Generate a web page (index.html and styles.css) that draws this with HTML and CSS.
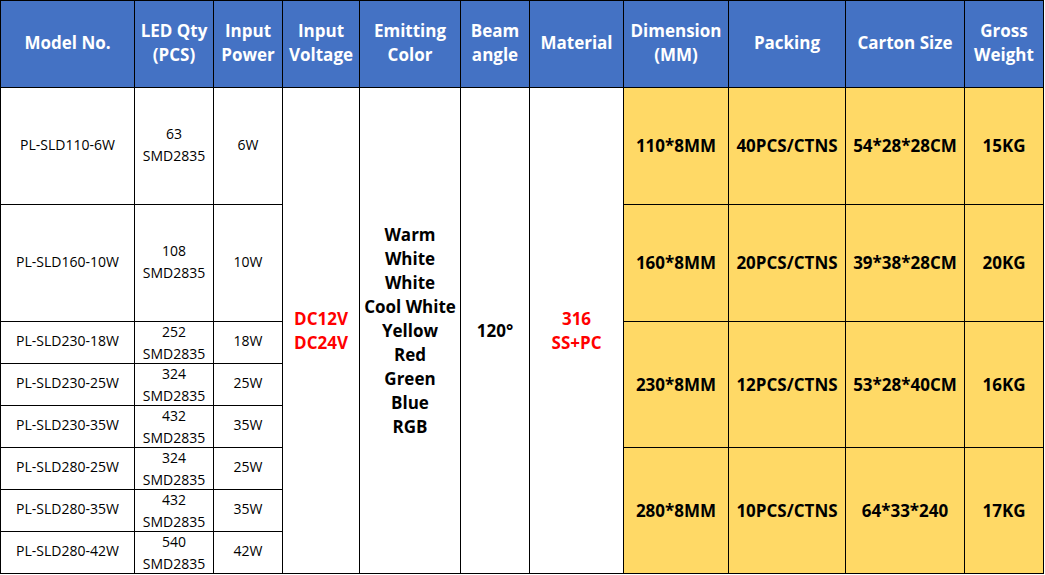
FILE: index.html
```html
<!DOCTYPE html>
<html>
<head>
<meta charset="utf-8">
<link rel="stylesheet" href="styles.css">
</head>
<body>
<table class="spec">
  <colgroup>
    <col class="c1"><col class="c2"><col class="c3"><col class="c4"><col class="c5"><col class="c6"><col class="c7"><col class="c8"><col class="c9"><col class="c10"><col class="c11">
  </colgroup>
  <thead>
    <tr class="head">
      <th>Model No.</th>
      <th>LED Qty<br>(PCS)</th>
      <th>Input<br>Power</th>
      <th>Input<br>Voltage</th>
      <th>Emitting<br>Color</th>
      <th>Beam<br>angle</th>
      <th>Material</th>
      <th>Dimension<br>(MM)</th>
      <th>Packing</th>
      <th>Carton Size</th>
      <th>Gross<br>Weight</th>
    </tr>
  </thead>
  <tbody>
    <tr class="tall">
      <td>PL-SLD110-6W</td>
      <td>63<br>SMD2835</td>
      <td>6W</td>
      <td rowspan="8" class="red">DC12V<br>DC24V</td>
      <td rowspan="8" class="bold">Warm<br>White<br>White<br>Cool White<br>Yellow<br>Red<br>Green<br>Blue<br>RGB</td>
      <td rowspan="8" class="bold">120°</td>
      <td rowspan="8" class="red">316<br>SS+PC</td>
      <td class="yel">110*8MM</td>
      <td class="yel">40PCS/CTNS</td>
      <td class="yel">54*28*28CM</td>
      <td class="yel">15KG</td>
    </tr>
    <tr class="tall">
      <td>PL-SLD160-10W</td>
      <td>108<br>SMD2835</td>
      <td>10W</td>
      <td class="yel">160*8MM</td>
      <td class="yel">20PCS/CTNS</td>
      <td class="yel">39*38*28CM</td>
      <td class="yel">20KG</td>
    </tr>
    <tr class="short">
      <td>PL-SLD230-18W</td>
      <td class="qty"><div class="fit">252<br>SMD2835</div></td>
      <td>18W</td>
      <td rowspan="3" class="yel">230*8MM</td>
      <td rowspan="3" class="yel">12PCS/CTNS</td>
      <td rowspan="3" class="yel">53*28*40CM</td>
      <td rowspan="3" class="yel">16KG</td>
    </tr>
    <tr class="short">
      <td>PL-SLD230-25W</td>
      <td class="qty"><div class="fit">324<br>SMD2835</div></td>
      <td>25W</td>
    </tr>
    <tr class="short">
      <td>PL-SLD230-35W</td>
      <td class="qty"><div class="fit">432<br>SMD2835</div></td>
      <td>35W</td>
    </tr>
    <tr class="short">
      <td>PL-SLD280-25W</td>
      <td class="qty"><div class="fit">324<br>SMD2835</div></td>
      <td>25W</td>
      <td rowspan="3" class="yel">280*8MM</td>
      <td rowspan="3" class="yel">10PCS/CTNS</td>
      <td rowspan="3" class="yel">64*33*240</td>
      <td rowspan="3" class="yel">17KG</td>
    </tr>
    <tr class="short">
      <td>PL-SLD280-35W</td>
      <td class="qty"><div class="fit">432<br>SMD2835</div></td>
      <td>35W</td>
    </tr>
    <tr class="short">
      <td>PL-SLD280-42W</td>
      <td class="qty"><div class="fit">540<br>SMD2835</div></td>
      <td>42W</td>
    </tr>
  </tbody>
</table>
</body>
</html>
```
FILE: styles.css
```css
html, body {
  margin: 0;
  padding: 0;
  background: #ffffff;
}

.spec {
  border-collapse: collapse;
  table-layout: fixed;
  width: 1044px;
  font-family: "Open Sans", "Noto Sans", sans-serif;
  color: #000;
}

.c1 { width: 134px; }
.c2 { width: 79px; }
.c3 { width: 69px; }
.c4 { width: 77px; }
.c5 { width: 101px; }
.c6 { width: 69px; }
.c7 { width: 94px; }
.c8 { width: 105px; }
.c9 { width: 117px; }
.c10 { width: 119px; }
.c11 { width: 79px; }

.spec th,
.spec td {
  border: 1px solid #000;
  padding: 0;
  text-align: center;
  vertical-align: middle;
  white-space: nowrap;
}

.spec th {
  background: #4472c4;
  color: #ffffff;
  font-weight: 700;
  font-size: 17px;
  line-height: 24px;
  padding-bottom: 2px;
}

.head { height: 87px; }
.tall { height: 117px; }
.short { height: 42px; }

.spec td {
  font-size: 14px;
  line-height: 22px;
  padding-bottom: 3px;
}

.spec td.qty {
  padding-bottom: 0;
}

.fit {
  height: 41px;
  display: flex;
  flex-direction: column;
  justify-content: center;
  align-items: center;
  line-height: 22px;
}

.spec td.bold,
.spec td.red,
.spec td.yel {
  font-weight: 700;
  font-size: 17px;
  line-height: 24px;
  padding-bottom: 0;
}

.spec td.red { color: #ff0000; }

.spec td.yel { background: #ffd966; }
```
